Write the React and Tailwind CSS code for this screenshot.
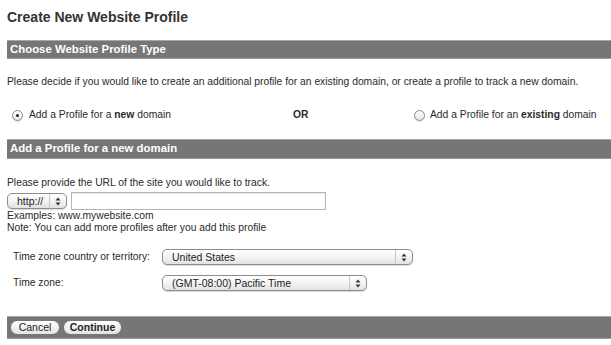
import React from "react";

function Arrows() {
  return (
    <svg width="6" height="9" viewBox="0 0 6 9" className="block">
      <path d="M3 0.5 L5.5 3.5 L0.5 3.5 Z" fill="#333" />
      <path d="M3 8.5 L5.5 5.5 L0.5 5.5 Z" fill="#333" />
    </svg>
  );
}

function FakeSelect({ label, className }) {
  return (
    <div
      className={
        "flex items-stretch h-[16px] rounded-[5px] border border-[#8c8c8c] bg-gradient-to-b from-white via-[#f4f4f4] to-[#e2e2e2] shadow-[0_1px_1px_rgba(0,0,0,0.15)] " +
        className
      }
    >
      <div className="flex-1 flex items-center pl-[9px] text-[10.5px] leading-none text-[#222]">
        {label}
      </div>
      <div className="w-[17px] flex items-center justify-center border-l border-[#c8c8c8]">
        <Arrows />
      </div>
    </div>
  );
}

function Radio({ checked }) {
  return (
    <div className="w-[11px] h-[11px] rounded-full border border-[#888] bg-gradient-to-b from-white to-[#e6e6e6] flex items-center justify-center shadow-[0_1px_1px_rgba(0,0,0,0.1)]">
      {checked && <div className="w-[3px] h-[3px] rounded-full bg-[#222]" />}
    </div>
  );
}

function Bar({ children, className }) {
  return (
    <div
      className={
        "ml-[7px] bg-[#767676] border-t border-[#a8a8a8] border-b border-b-[#9a9a9a] flex items-center " +
        className
      }
    >
      {children}
    </div>
  );
}

function Pill({ children, bold }) {
  return (
    <div
      className={
        "h-[15px] rounded-full border border-[#777] bg-gradient-to-b from-white to-[#e4e4e4] flex items-center justify-center text-[10.5px] leading-none text-[#222] " +
        (bold ? "font-bold w-[59px]" : "w-[50px]")
      }
    >
      {children}
    </div>
  );
}

export default function App() {
  return (
    <div
      className="w-[611px] h-[345px] bg-white overflow-hidden text-[#2a2a2a] flex flex-col text-[10.3px]"
      style={{ fontFamily: '"Liberation Sans", Arial, sans-serif' }}
    >
      <div className="ml-[7px] mt-[10px] h-[14px] flex items-center text-[14px] font-bold text-[#333] leading-none">
        Create New Website Profile
      </div>

      <Bar className="mt-[16px] h-[19px]">
        <span className="pl-[3px] text-[11.4px] font-bold text-white leading-none">
          Choose Website Profile Type
        </span>
      </Bar>

      <div className="ml-[7px] mt-[17px] h-[13px] flex items-center leading-none whitespace-nowrap">
        Please decide if you would like to create an additional profile for an existing domain, or create a profile to track a new domain.
      </div>

      <div className="mt-[20px] h-[13px] flex items-center leading-none whitespace-nowrap">
        <div className="ml-[12px] w-[281px] flex items-center">
          <Radio checked />
          <span className="ml-[6px]">
            Add a Profile for a <b>new</b> domain
          </span>
        </div>
        <div className="w-[121px] font-bold">OR</div>
        <div className="flex items-center">
          <Radio />
          <span className="ml-[5px]">
            Add a Profile for an <b>existing</b> domain
          </span>
        </div>
      </div>

      <Bar className="mt-[17px] h-[20px]">
        <span className="pl-[3px] text-[11.4px] font-bold text-white leading-none">
          Add a Profile for a new domain
        </span>
      </Bar>

      <div className="ml-[7px] mt-[18px] h-[13px] flex items-center leading-none">
        Please provide the URL of the site you would like to track.
      </div>

      <div className="ml-[7px] mt-[2px] flex items-center">
        <FakeSelect label="http://" className="w-[60px]" />
        <div className="ml-[4px] w-[255px] h-[18px] border border-[#b5b5b5] bg-white shadow-[inset_0_1px_1px_rgba(0,0,0,0.1)]" />
      </div>

      <div className="ml-[7px] h-[12px] flex items-center leading-none">
        Examples: www.mywebsite.com
      </div>
      <div className="ml-[7px] h-[12px] flex items-center leading-none">
        Note: You can add more profiles after you add this profile
      </div>

      <div className="mt-[15px] h-[16px] flex items-center leading-none">
        <div className="ml-[13px] w-[149px]">Time zone country or territory:</div>
        <FakeSelect label="United States" className="w-[251px]" />
      </div>

      <div className="mt-[10px] h-[16px] flex items-center leading-none">
        <div className="ml-[13px] w-[149px]">Time zone:</div>
        <FakeSelect label="(GMT-08:00) Pacific Time" className="w-[205px]" />
      </div>

      <Bar className="mt-[25px] h-[23px] pl-[3px] gap-[3px]">
        <Pill>Cancel</Pill>
        <Pill bold>Continue</Pill>
      </Bar>
    </div>
  );
}
